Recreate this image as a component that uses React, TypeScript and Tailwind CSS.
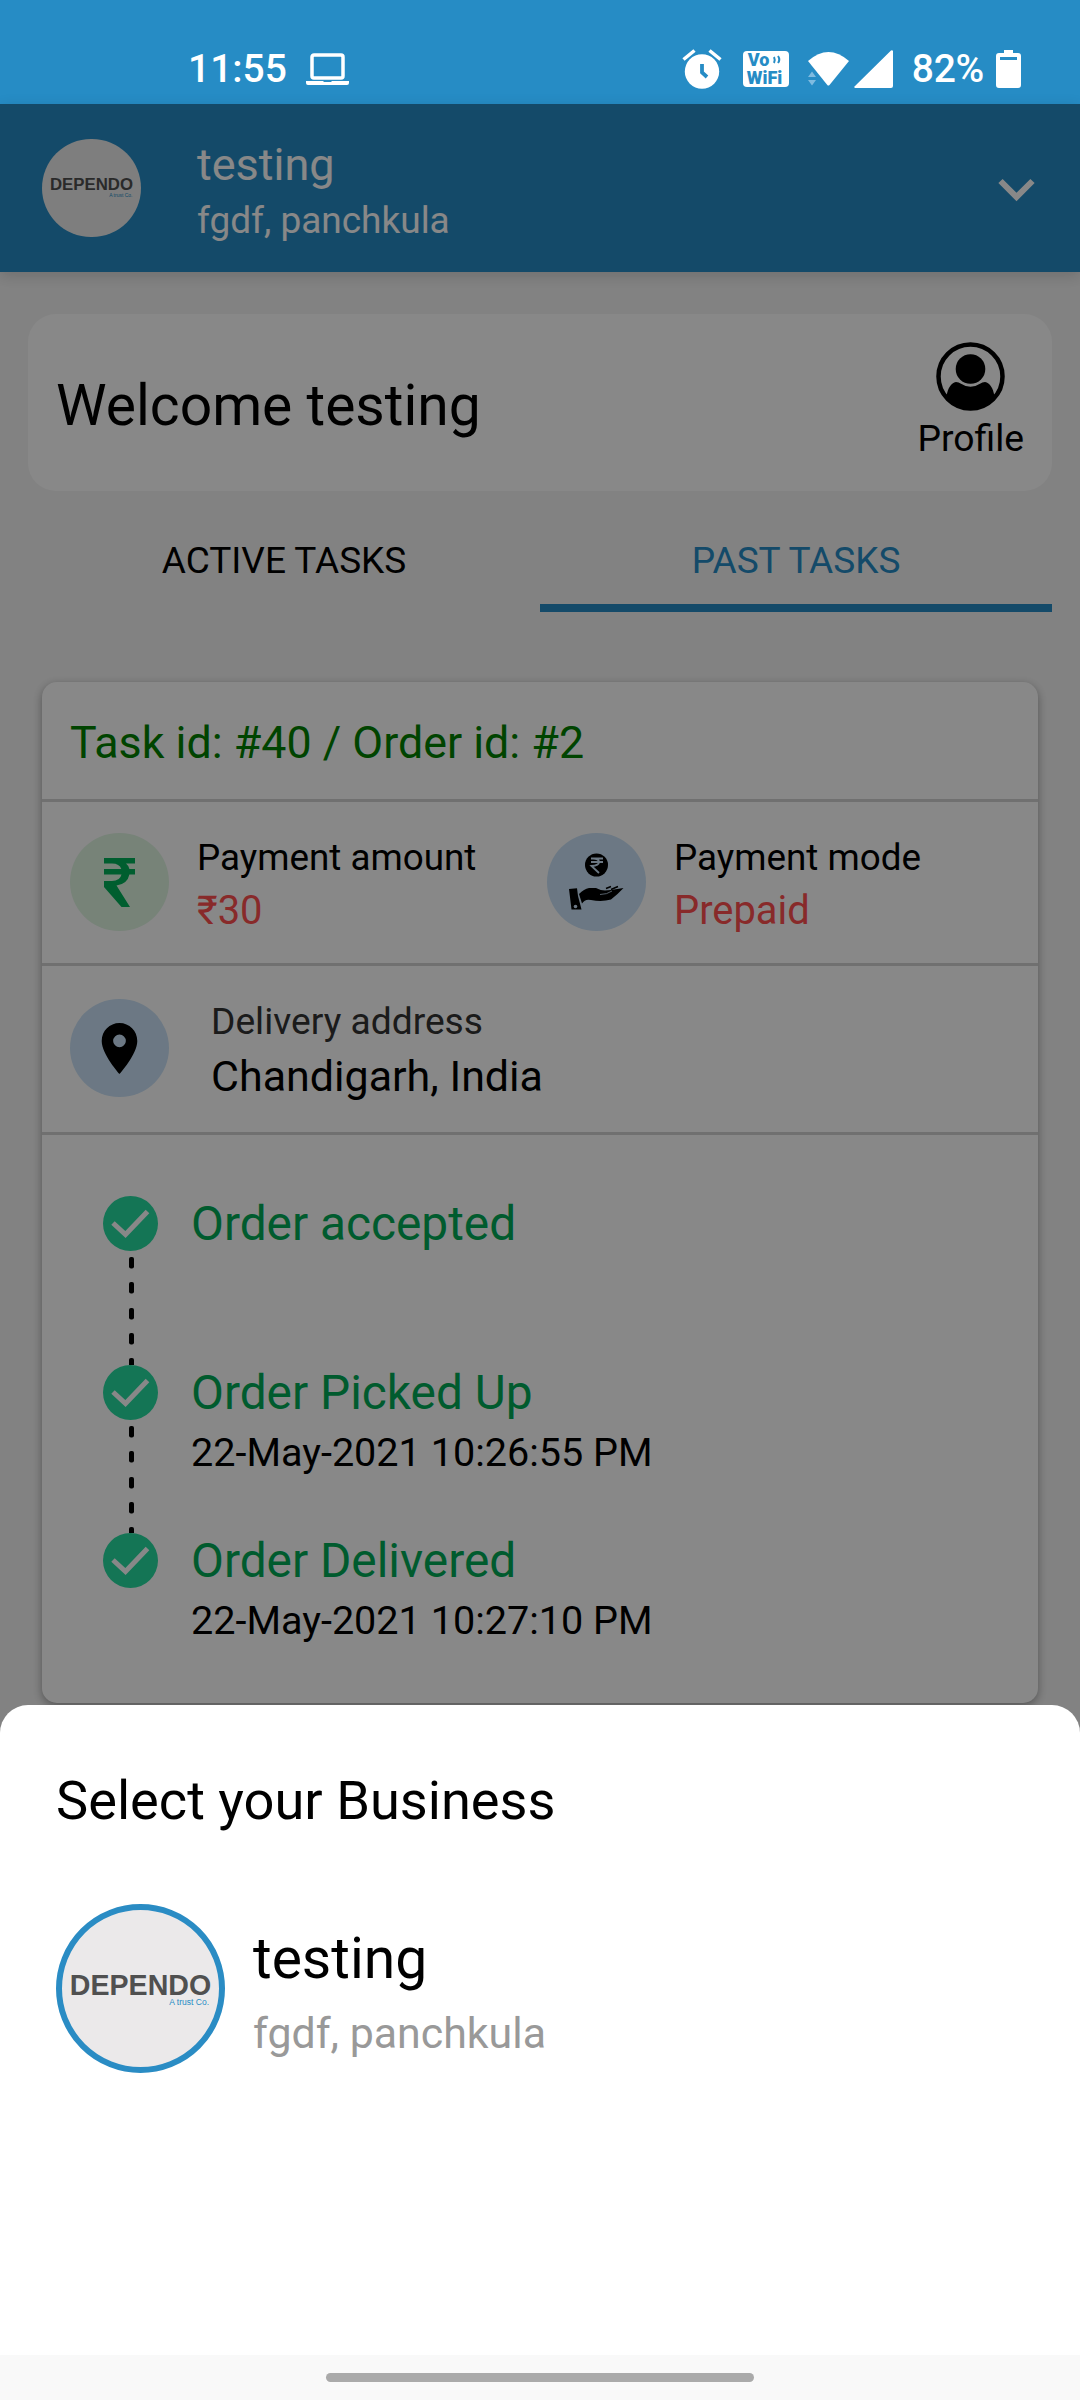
import React from "react";

const steps = [
  { title: "Order accepted", time: "" },
  { title: "Order Picked Up", time: "22-May-2021 10:26:55 PM" },
  { title: "Order Delivered", time: "22-May-2021 10:27:10 PM" },
];

function StatusBar() {
  return (
    <div className="flex h-[104px] items-center bg-[#268cc5] pr-[59px] pl-[188px] pt-[34px] text-white">
      <span className="text-[39px] leading-[46px] font-medium">11:55</span>
      <svg className="ml-[19px] h-[32px] w-[43px]" viewBox="0 0 43 32" fill="none">
        <rect x="6" y="2" width="31" height="23" rx="2" stroke="white" strokeWidth="3.500" />
        <path d="M0 28h17l1 1h7l1-1h17v2q0 2-2 2H2Q0 32 0 30z" fill="white" />
      </svg>
      <div className="ml-auto flex items-center">
        <svg className="h-[40px] w-[40px]" viewBox="0 0 40 40">
          <circle cx="20" cy="22.500" r="17.200" fill="white" />
          <path d="M1.500 10.500 12.500 1.500M38.500 10.500 27.500 1.500" stroke="white" strokeWidth="3.500" />
          <path d="M20 15v8.500l5 4.500" stroke="#268cc5" strokeWidth="3.800" fill="none" />
        </svg>
        <div className="relative ml-[21px] h-[36px] w-[46px] rounded-[4px] bg-white text-[#268cc5]">
          <span className="absolute top-0 left-[5px] text-[18px] leading-[17px] font-black">Vo</span>
          <span className="absolute top-[18px] left-[4px] text-[18px] leading-[17px] font-black">WiFi</span>
          <svg className="absolute top-[4px] left-[30px] h-[9px] w-[10px]" viewBox="0 0 10 9" fill="none" stroke="#268cc5" strokeWidth="2">
            <path d="M1 2q1.500 3 0 6M5 1q2.500 3.500 0 7" />
          </svg>
        </div>
        <svg className="ml-[18px] h-[36px] w-[43px]" viewBox="0 0 43 36">
          <path d="M1 10Q21.500-8 42 10L22.500 34q-1.200 1-2.200 0z" fill="white" />
          <path d="M5 20.500 9 26H1zM5 34.500 1 29h8z" fill="#7fbbe0" />
        </svg>
        <svg className="ml-[4px] h-[38px] w-[39px]" viewBox="0 0 39 38">
          <path d="M39 1v35q0 2-2 2H1q-1.500-1 0-2L37 .5q1.500-.8 2 .5z" fill="white" />
        </svg>
        <span className="ml-[19px] text-[39px] leading-[46px] font-medium tracking-[-0.300px]">82%</span>
        <svg className="ml-[12px] h-[38px] w-[25px]" viewBox="0 0 25 38">
          <path d="M8 0h9v3h5q3 0 3 3v29q0 3-3 3H3q-3 0-3-3V6q0-3 3-3h5z" fill="white" />
          <path d="M4 7h17v3H4z" fill="#268cc5" />
        </svg>
      </div>
    </div>
  );
}

function HeaderBar() {
  return (
    <div className="relative flex h-[168px] bg-[#268cc5] pl-[42px] text-white shadow-[0_4px_14px_rgba(0,0,0,0.15)]">
      <div className="mt-[35px] flex h-[98px] w-[99px] flex-col items-center justify-center rounded-full bg-[#ececec] font-['Liberation_Sans',sans-serif]">
        <span className="text-[16.800px] leading-[14px] font-bold text-[#505050]">DEPENDO</span>
        <span className="w-[82px] text-right text-[5px] leading-[6px] text-[#268cc5]">A trust Co.</span>
      </div>
      <div className="ml-[56px] flex flex-col pt-[35px]">
        <span className="text-[45px] leading-[52px]">testing</span>
        <span className="text-[37px] leading-[59px]">fgdf, panchkula</span>
      </div>
      <svg className="mt-[74px] mr-[45px] ml-auto h-[24px] w-[37px]" viewBox="0 0 37 24" fill="none" stroke="white" strokeWidth="6">
        <path d="M2.500 3 18.500 19 34.500 3" />
      </svg>
    </div>
  );
}

function WelcomeCard() {
  return (
    <div className="mx-[28px] mt-[42px] flex h-[177px] items-center justify-between rounded-[28px] bg-white pr-[28px] pl-[28px]">
      <span className="pt-[7px] text-[57px] leading-[66px]">Welcome testing</span>
      <div className="flex flex-col items-center pt-[2px]">
        <svg className="h-[69px] w-[69px]" viewBox="0 0 69 69">
          <circle cx="34.500" cy="34.500" r="32" fill="none" stroke="black" strokeWidth="4.500" />
          <circle cx="34.500" cy="27" r="14.800" />
          <path d="M10.500 54C12 46 15 41 20 40q3 0 4.500 1.500 10 6.500 20 0Q46 40 49 40c5 1 8 6 9.500 14Q48 68 34.500 68 20 68 10.500 54z" />
        </svg>
        <span className="text-[37.300px] leading-[54px]">Profile</span>
      </div>
    </div>
  );
}

function Tabs() {
  return (
    <div className="mx-[28px] grid h-[121px] grid-cols-2 text-center text-[37px]">
      <div className="pt-[44px] leading-[52px]">ACTIVE TASKS</div>
      <div className="border-b-8 border-[#268cc5] pt-[44px] leading-[52px] text-[#268cc5]">PAST TASKS</div>
    </div>
  );
}

function Rupee({ className }: { className: string }) {
  return (
    <svg className={className} viewBox="0 0 31 49">
      <path d="M0 0h31v5.500H22q2.800 2.200 3.400 5.500H31v5.500h-5.600Q23.500 26 12.500 27.500L26 49h-8.500L0 29v-6h8q8 0 9.500-6.500H0V11h17.300Q15.500 5.500 8 5.500H0z" fill="currentColor" />
    </svg>
  );
}

function PaymentModeIcon() {
  return (
    <svg className="h-[58px] w-[56px]" viewBox="0 0 56 58">
      <circle cx="27.500" cy="12" r="11.500" />
      <path d="M22 5.500h12M22 9h12M24 5.500q6 0 6 3.500T22.500 13l7.500 7" fill="none" stroke="#cae2f7" strokeWidth="1.800" />
      <path d="M0 36 8 35.200 9 43 12.500 56.500H2.500z" />
      <path d="M10 41Q15 36 20 35l7 0q5 2.500 9 2.500l6-.5 12.500-2Q48 42 42 46.500q-9 2.500-20 .5-6-1.500-9 3.500z" />
      <path d="M37 35.500 42 33.500M42 36.500 49 33.500" stroke="black" strokeWidth="1.500" />
      <path d="M31 41.500q7 0 12-3.500" fill="none" stroke="#cae2f7" strokeWidth=".8" />
      <circle cx="6.500" cy="53.500" r="1.800" fill="#cae2f7" />
    </svg>
  );
}

function IconDisc({ tint, children }: { tint: string; children: React.ReactNode }) {
  return <div className={`flex h-[98px] w-[99px] shrink-0 items-center justify-center rounded-full ${tint}`}>{children}</div>;
}

function Timeline() {
  return (
    <div className="flex flex-col pt-[61px] pl-[61px]">
      {steps.map((s, i) => (
        <div key={s.title} className="flex h-[168.500px] gap-[33px]">
          <div className="flex w-[55px] flex-col items-center">
            <svg className="h-[55px] w-[55px] shrink-0" viewBox="0 0 55 55">
              <circle cx="27.500" cy="27.500" r="27.500" fill="#27dba0" />
              <path d="M10 27 22.500 38.500 44.500 15.500" fill="none" stroke="white" strokeWidth="5" />
            </svg>
            {i < 2 && (
              <svg className="ml-[2px] h-[113.500px] w-[5px] shrink-0" viewBox="0 0 5 113.500">
                {[6, 31, 57, 82, 107].map((y) => (
                  <rect key={y} x="0" y={y} width="5" height="11.500" rx="2" />
                ))}
              </svg>
            )}
          </div>
          <div className="flex flex-col">
            <span className="text-[47.800px] leading-[57px] text-[#00ab56]">{s.title}</span>
            <span className="pt-[2px] text-[39.600px] leading-[58px]">{s.time}</span>
          </div>
        </div>
      ))}
    </div>
  );
}

function TaskCard() {
  return (
    <div className="mx-[42px] mt-[70px] h-[1021px] rounded-[15px] bg-white shadow-[0_3px_10px_rgba(0,0,0,0.35)]">
      <div className="h-[120px] border-b-[3px] border-[#d3d3d3] pt-[34px] pl-[28px] text-[44.800px] leading-[53px] text-[#008000]">
        Task id: #40 / Order id: #2
      </div>
      <div className="grid h-[164px] grid-cols-[477px_1fr] border-b-[3px] border-[#d3d3d3] pt-[31px] pl-[28px]">
        <div className="flex gap-[28px]">
          <IconDisc tint="bg-[#dff5e2]"><Rupee className="h-[49px] w-[31px] text-[#00b058]" /></IconDisc>
          <div className="flex flex-col">
            <span className="text-[36.800px] leading-[50px]">Payment amount</span>
            <span className="text-[39.900px] leading-[56px] text-[#ff5050]">₹30</span>
          </div>
        </div>
        <div className="flex gap-[28px]">
          <IconDisc tint="bg-[#cae2f7]"><PaymentModeIcon /></IconDisc>
          <div className="flex flex-col">
            <span className="text-[36.800px] leading-[50px]">Payment mode</span>
            <span className="text-[39.900px] leading-[56px] text-[#ff5050]">Prepaid</span>
          </div>
        </div>
      </div>
      <div className="flex h-[169px] gap-[42px] border-b-[3px] border-[#d3d3d3] pt-[33px] pl-[28px]">
        <IconDisc tint="bg-[#cae2f7]">
          <svg className="h-[61px] w-[61px]" viewBox="0 0 24 24">
            <path d="M12 2C8.130 2 5 5.130 5 9c0 5.250 7 13 7 13s7-7.750 7-13c0-3.870-3.130-7-7-7zm0 9.500a2.500 2.500 0 1 1 0-5 2.500 2.500 0 0 1 0 5z" />
          </svg>
        </IconDisc>
        <div className="-mt-px flex flex-col">
          <span className="text-[37.200px] leading-[46px] text-[#333333]">Delivery address</span>
          <span className="text-[43px] leading-[64px]">Chandigarh, India</span>
        </div>
      </div>
      <Timeline />
    </div>
  );
}

function BusinessSheet() {
  return (
    <div className="absolute inset-x-0 top-[1705px] bottom-0 flex flex-col overflow-hidden rounded-t-[28px] bg-white">
      <h2 className="pt-[65px] pl-[56px] text-[54.200px] leading-[62px]">Select your Business</h2>
      <div className="mt-[72px] flex pl-[56px]">
        <div className="flex h-[169px] w-[169px] flex-col items-center justify-center rounded-full border-[6px] border-[#2a8cc4] bg-[#ebe9ea] pt-[2px] font-['Liberation_Sans',sans-serif]">
          <span className="text-[28.600px] leading-[24px] font-bold text-[#505050]">DEPENDO</span>
          <span className="w-[137px] text-right text-[8.500px] leading-[10px] text-[#268cc5]">A trust Co.</span>
        </div>
        <div className="ml-[28px] flex flex-col pt-[20px]">
          <span className="text-[57px] leading-[70px]">testing</span>
          <span className="text-[42.900px] leading-[78px] text-[#999999]">fgdf, panchkula</span>
        </div>
      </div>
      <div className="mt-auto flex h-[45px] justify-center bg-[#f9f9f9] pt-[18px]">
        <div className="h-[9px] w-[428px] rounded-full bg-[#aaaaaa]" />
      </div>
    </div>
  );
}

export default function App() {
  return (
    <div className="relative h-[2400px] w-[1080px] overflow-hidden bg-[#f4f4f4] font-[Roboto,sans-serif] text-black">
      <StatusBar />
      <HeaderBar />
      <WelcomeCard />
      <Tabs />
      <TaskCard />
      <div className="absolute inset-x-0 top-[104px] bottom-0 bg-black/[0.467]" />
      <BusinessSheet />
    </div>
  );
}
